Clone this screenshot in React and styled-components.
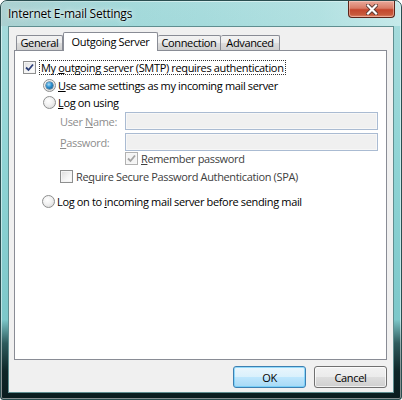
import React from 'react'
import styled, { createGlobalStyle } from 'styled-components'

const Global = createGlobalStyle`
  html, body { margin: 0; padding: 0; background: #fff; }
  body {
    font-family: "Segoe UI", "Open Sans", "Noto Sans", sans-serif;
    font-size: 11px;
    letter-spacing: -0.35px;
    color: #000;
  }
`

const Window = styled.div`
  box-sizing: border-box;
  width: 402px;
  height: 400px;
  border: 1px solid #2a4e50;
  border-radius: 7px 7px 3px 3px;
  background: linear-gradient(to bottom, #a9dcdd 0%, #8fd4d5 40%, #7dc8ca 80%, #2e5b5d 86%, #0e2628 93%, #0a1c1e 100%);
  box-shadow: inset 0 0 0 1px rgba(255, 255, 255, 0.5);
  display: flex;
  flex-direction: column;
  overflow: hidden;
`

const TitleBar = styled.div`
  height: 25px;
  flex: none;
  display: flex;
  justify-content: space-between;
  align-items: flex-start;
  padding: 0 6px 0 7px;
  background: linear-gradient(90deg, rgba(175, 200, 200, 0.55) 0%, rgba(150, 210, 210, 0.25) 30%, rgba(120, 215, 216, 0) 50%, rgba(200, 235, 235, 0.35) 80%, rgba(225, 245, 245, 0.55) 100%);
`

const Title = styled.span`
  line-height: 25px;
  font-size: 12px;
  letter-spacing: -0.25px;
  text-shadow: 0 0 6px rgba(255, 255, 255, 0.9), 0 0 2px rgba(255, 255, 255, 0.9);
`

const CloseButton = styled.div`
  width: 47px;
  height: 17px;
  box-sizing: border-box;
  border: 1px solid #5b2419;
  border-top: none;
  border-radius: 0 0 4px 4px;
  background: linear-gradient(to bottom, #e9a99a 0%, #d97c66 45%, #c4462c 55%, #c75a3c 85%, #e2876a 100%);
  box-shadow: inset 0 0 0 1px rgba(255, 220, 210, 0.45);
  display: flex;
  align-items: center;
  justify-content: center;
`

const Client = styled.div`
  flex: 1;
  box-sizing: border-box;
  margin: 0 7px 6px 7px;
  border: 1px solid #5f8e90;
  background: #f0f0f0;
  padding: 5px 6px 0 5px;
  display: flex;
  flex-direction: column;
`

const TabRow = styled.div`
  height: 18px;
  display: flex;
  align-items: flex-end;
  padding-left: 2px;
`

const Tab = styled.div`
  box-sizing: border-box;
  width: ${p => p.$w}px;
  height: ${p => (p.$active ? 19 : 15)}px;
  margin-bottom: ${p => (p.$active ? -1 : 0)}px;
  border: 1px solid #898c95;
  border-bottom: ${p => (p.$active ? 'none' : '0')};
  border-left-width: ${p => (p.$first || p.$active ? 1 : 0)}px;
  border-radius: 2px 2px 0 0;
  background: ${p => (p.$active ? '#fff' : 'linear-gradient(to bottom, #f3f3f3 0%, #ebebeb 50%, #dddddd 51%, #cfcfcf 100%)')};
  position: relative;
  z-index: ${p => (p.$active ? 2 : 1)};
  text-align: center;
  line-height: ${p => (p.$active ? 17 : 14)}px;
  white-space: nowrap;
`

const Panel = styled.div`
  box-sizing: border-box;
  height: 310px;
  border: 1px solid #898c95;
  background: #fff;
  padding: 9px 0 0 8px;
  display: flex;
  flex-direction: column;
`

const Row = styled.div`
  display: flex;
  align-items: center;
  height: ${p => p.$h || 15}px;
  margin-top: ${p => p.$mt || 0}px;
  margin-left: ${p => p.$indent || 0}px;
  white-space: nowrap;
`

const Box = styled.span`
  box-sizing: border-box;
  flex: none;
  width: 13px;
  height: 13px;
  border: 1px solid ${p => (p.$disabled ? '#b1b1b1' : '#8e8f8f')};
  background: ${p => (p.$disabled ? '#f4f4f4' : 'linear-gradient(135deg, #dcdcdc 0%, #f6f6f6 60%, #ffffff 100%)')};
  box-shadow: inset 0 0 0 1px ${p => (p.$disabled ? '#f7f7f7' : '#f4f4f4')};
  margin-right: ${p => p.$gap || 3}px;
  display: flex;
  align-items: center;
  justify-content: center;
`

const Radio = styled.span`
  box-sizing: border-box;
  flex: none;
  width: 13px;
  height: 13px;
  border-radius: 50%;
  border: 1px solid #8e8f8f;
  background: radial-gradient(circle at 40% 35%, #ffffff 0%, #f1f1f1 45%, #d3d3d3 100%);
  margin-right: 2px;
  display: flex;
  align-items: center;
  justify-content: center;
`

const Dot = styled.span`
  width: 7px;
  height: 7px;
  border-radius: 50%;
  background: radial-gradient(circle at 40% 35%, #a9dcf6 0%, #2c8fcf 45%, #0e4f7d 100%);
  box-shadow: 0 0 0 0.5px #1a4a6b;
`

const Label = styled.span`
  color: ${p => (p.$muted ? '#8d8d8d' : p.$soft ? '#404040' : '#000')};
  width: ${p => (p.$w ? `${p.$w}px` : 'auto')};
`

const Focus = styled.span`
  border: 1px dotted #333;
  padding: 0 1px 0 1px;
  line-height: 13px;
`

const Key = styled.span`
  text-decoration: underline;
`

const Field = styled.div`
  box-sizing: border-box;
  width: 253px;
  height: 18px;
  border: 1px solid #aabbd2;
  background: #f0f0f0;
  box-shadow: inset 0 0 0 1px #f7f7f7;
`

const Footer = styled.div`
  display: flex;
  justify-content: flex-end;
  gap: 8px;
  margin-top: 6px;
`

const Button = styled.div`
  box-sizing: border-box;
  width: 73px;
  height: 22px;
  border-radius: 3px;
  border: 1px solid ${p => (p.$focus ? '#3c7fb1' : '#707070')};
  background: ${p => (p.$focus
    ? 'linear-gradient(to bottom, #eaf6fd 0%, #d9f0fc 50%, #bee6fd 51%, #a7d9f5 100%)'
    : 'linear-gradient(to bottom, #f2f2f2 0%, #ebebeb 50%, #dddddd 51%, #cfcfcf 100%)')};
  box-shadow: inset 0 0 0 1px ${p => (p.$focus ? 'rgba(90, 200, 250, 0.6)' : 'rgba(255, 255, 255, 0.7)')};
  display: flex;
  align-items: center;
  justify-content: center;
`

const Check = ({ color }) => (
  <svg width="9" height="9" viewBox="0 0 9 9">
    <path d="M1 4.5 L3.5 7 L8 1.5" fill="none" stroke={color} strokeWidth="1.8" />
  </svg>
)

const CloseX = () => (
  <svg width="12" height="11" viewBox="0 0 12 11">
    <path d="M2 1.5 L10 9.5 M10 1.5 L2 9.5" stroke="#5a3a33" strokeWidth="4" strokeLinecap="square" />
    <path d="M2 1.5 L10 9.5 M10 1.5 L2 9.5" stroke="#ffffff" strokeWidth="2.2" strokeLinecap="square" />
  </svg>
)

export default function App() {
  return (
    <>
      <Global />
      <Window>
        <TitleBar>
          <Title>Internet E-mail Settings</Title>
          <CloseButton><CloseX /></CloseButton>
        </TitleBar>
        <Client>
          <TabRow>
            <Tab $w={47} $first>General</Tab>
            <Tab $w={95} $active>Outgoing Server</Tab>
            <Tab $w={63}>Connection</Tab>
            <Tab $w={59}>Advanced</Tab>
          </TabRow>
          <Panel>
            <Row>
              <Box $gap={3}><Check color="#2d3f78" /></Box>
              <Focus>My <Key>o</Key>utgoing server (SMTP) requires authentication</Focus>
            </Row>
            <Row $mt={3} $indent={20}>
              <Radio><Dot /></Radio>
              <Label><Key>U</Key>se same settings as my incoming mail server</Label>
            </Row>
            <Row $mt={2} $indent={20}>
              <Radio />
              <Label><Key>L</Key>og on using</Label>
            </Row>
            <Row $mt={2} $h={18} $indent={37}>
              <Label $muted $w={65}>User <Key>N</Key>ame:</Label>
              <Field />
            </Row>
            <Row $mt={3} $h={18} $indent={37}>
              <Label $muted $w={65}><Key>P</Key>assword:</Label>
              <Field />
            </Row>
            <Row $indent={102}>
              <Box $disabled><Check color="#a3a3a3" /></Box>
              <Label $soft><Key>R</Key>emember password</Label>
            </Row>
            <Row $mt={3} $indent={37}>
              <Box $gap={3} />
              <Label $soft>Re<Key>q</Key>uire Secure Password Authentication (SPA)</Label>
            </Row>
            <Row $mt={10} $indent={19}>
              <Radio />
              <Label>Log on to <Key>i</Key>ncoming mail server before sending mail</Label>
            </Row>
          </Panel>
          <Footer>
            <Button $focus>OK</Button>
            <Button>Cancel</Button>
          </Footer>
        </Client>
      </Window>
    </>
  )
}
